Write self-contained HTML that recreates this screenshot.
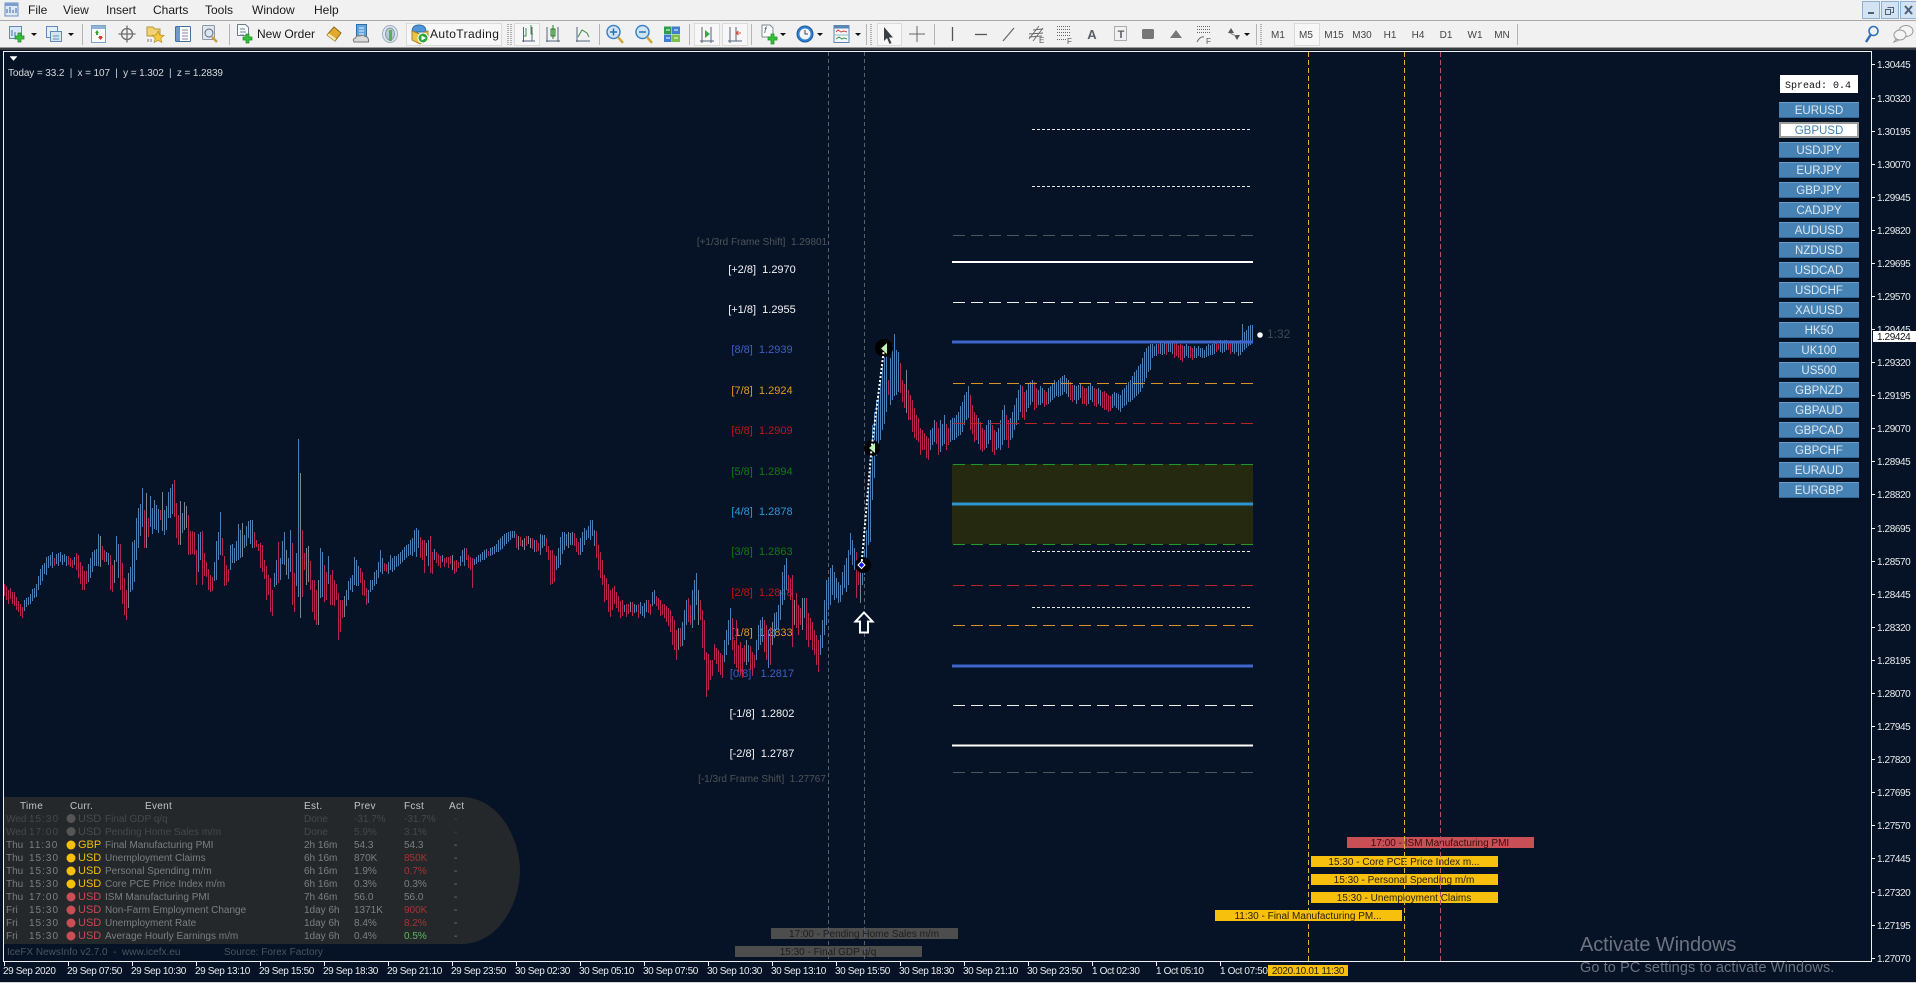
<!DOCTYPE html>
<html><head><meta charset="utf-8"><title>MetaTrader</title>
<style>
html,body{margin:0;padding:0;width:1916px;height:983px;overflow:hidden;background:#061326}
svg{display:block}
text{font-family:"Liberation Sans",sans-serif;font-size:10px}
.m{font-size:12px;fill:#1a1a1a}
.ax{fill:#e8eaec;letter-spacing:-.4px}
.tm{fill:#e8eaec;letter-spacing:-.38px}
.tf{fill:#444;text-anchor:middle}
.lv{font-size:11px;text-anchor:middle}
.bt{font-size:11.5px;fill:#dbe8f3;text-anchor:middle}
.nb{fill:#2b2200;text-anchor:middle}
.h{fill:#c4c4c4;letter-spacing:.3px}
.g{fill:#7e7e7e}
.gt{fill:#7e7e7e;letter-spacing:1px}
.d{fill:#474747}
.dt{fill:#474747;letter-spacing:1px}
.y{fill:#f4bc10;font-size:11px}
.r{fill:#c94a50;font-size:11px}
.dg{fill:#4a4a4a;font-size:11px}
.B{stroke:#4a80b4;fill:none}
.R{stroke:#b8244e;fill:none}
.G{stroke:#7c8490;fill:none}
</style></head><body>
<svg xmlns="http://www.w3.org/2000/svg" width="1916" height="983" viewBox="0 0 1916 983">
<!-- chrome -->
<rect width="1916" height="983" fill="#061326"/>
<rect width="1916" height="47" fill="#f1f1f1"/>
<rect y="20" width="1916" height="1" fill="#a9a9a9"/>
<rect y="47" width="1916" height="1" fill="#9a9a9a"/>
<rect y="48" width="1916" height="2" fill="#3a3d40"/>
<rect y="982" width="1916" height="1" fill="#cfd3d6"/>
<!-- app icon -->
<g transform="translate(12,10)"><rect x="-7" y="-7" width="13" height="13" fill="#dfe8f5" stroke="#6f8fc0"/><rect x="-7" y="-7" width="13" height="3" fill="#7d9fd0"/><path d="M-5 3v-4M-2 3v-6M1 3v-3M4 3v-5" stroke="#3a62a8" fill="none"/></g>
<text class="m" x="28" y="14">File</text><text class="m" x="63" y="14">View</text><text class="m" x="106" y="14">Insert</text><text class="m" x="153" y="14">Charts</text><text class="m" x="205" y="14">Tools</text><text class="m" x="252" y="14">Window</text><text class="m" x="314" y="14">Help</text>
<!-- window buttons -->
<g fill="#d4e3f1" stroke="#8fb0cf"><rect x="1862.5" y="1.5" width="17" height="17"/><rect x="1881.5" y="1.5" width="17" height="17"/><rect x="1900.5" y="1.5" width="16" height="17"/></g>
<rect x="1868" y="12" width="6" height="2" fill="#4c6078"/>
<path d="M1887.5 7.5h6v5h-2M1885.5 9.5h5v5h-5z" fill="none" stroke="#4c6078"/>
<path d="M1905 6l7 8M1912 6l-7 8" stroke="#4c6078" stroke-width="2"/>
<!-- toolbar pressed boxes -->
<g fill="#f7f7f7" stroke="#dadada"><rect x="406.5" y="23.5" width="95" height="22"/><rect x="514.5" y="23.5" width="25" height="22"/><rect x="694.5" y="23.5" width="25" height="22"/><rect x="722.5" y="23.5" width="25" height="22"/><rect x="877.5" y="23.5" width="24" height="22"/><rect x="1294.5" y="23.5" width="25" height="22"/></g>
<path d="M82.5 24v21M229.5 24v21M599.5 24v21M689.5 24v21M751.5 24v21M866.5 24v21M934.5 24v21M1256.5 24v21M1517.5 24v21" stroke="#b4b4b4"/>
<path d="M508 24v21M511 24v21M871 24v21M1261 24v21" stroke="#b0b0b0" stroke-dasharray="1 1" stroke-width="2"/>
<!-- dropdown arrows -->
<path d="M31 33h6l-3 3zM68 33h6l-3 3zM780 33h6l-3 3zM817 33h6l-3 3zM855 33h6l-3 3zM1244 33h6l-3 3z" fill="#111"/>
<!-- new chart -->
<g transform="translate(16,34)"><rect x="-6.5" y="-7.5" width="12" height="12" fill="#d8e8f6" stroke="#5f8bb5"/><path d="M-4 2v-6M-1 2v-4" stroke="#46759e"/><path d="M2-1h3v3h3v3H5v3H2V5h-3V2h3z" fill="#34c23a" stroke="#1c8a22" stroke-width=".7"/></g>
<g transform="translate(53,34)"><rect x="-6.5" y="-7.5" width="11" height="11" fill="#e4eef8" stroke="#5f8bb5"/><rect x="-2.5" y="-2.5" width="11" height="10" fill="#d5e4f3" stroke="#5f8bb5"/><path d="M0 2h6M0 5h6" stroke="#5f8bb5"/></g>
<!-- market watch -->
<g transform="translate(99,34)"><rect x="-7.5" y="-8.5" width="14" height="17" fill="#fbfbfb" stroke="#7ea3c9"/><rect x="-7" y="-8" width="13" height="3" fill="#8fb3d6"/><path d="M-4-1l2-3 2 3h-1v2h-2v-2z" fill="#2fa83a"/><path d="M0 2h3v1h1l-2.500 3L-1 3h1z" fill="#d43a2a"/></g>
<!-- navigator -->
<g transform="translate(127,34)" fill="none" stroke="#6e6e6e" stroke-width="1.300"><circle r="5.500"/><path d="M0-8.500v17M-8.500 0h17"/></g>
<!-- folder star -->
<g transform="translate(155,34)"><path d="M-8-7h6l2 2h5v7h-13z" fill="#f2d275" stroke="#b8953a"/><path d="M3-3l1.800 4 4.200.4-3.200 2.800 1 4.200L3 6.200-.8 8.400l1-4.200L-3 1.400 1.200 1z" fill="#f8c93c" stroke="#b88e1e" stroke-width=".7"/><path d="M-7 5v3M-4 5v3" stroke="#777"/></g>
<!-- terminal -->
<g transform="translate(183,34)"><rect x="-7.500" y="-7.500" width="15" height="15" rx="1" fill="#fdfdfd" stroke="#456f9e"/><rect x="-7" y="-7" width="4" height="14" fill="#6f9ac6"/><path d="M-1-4h6M-1-1h6M-1 2h6M-1 5h6" stroke="#88a"/></g>
<!-- tester -->
<g transform="translate(210,34)"><rect x="-7.500" y="-8.500" width="12" height="14" rx="1" fill="#dfe6ee" stroke="#8a98a8"/><circle cx="-1" cy="-1" r="4" fill="#d8e6f2" stroke="#667"/><path d="M2 3l5 5" stroke="#c9a23c" stroke-width="2.500"/></g>
<!-- new order -->
<g transform="translate(245,34)"><path d="M-7.500-9.500h8l3 3v8h-11z" fill="#fff" stroke="#6a7f94"/><path d="M-5-5h5M-5-2h6M-5 1h4" stroke="#6a7f94"/><path d="M1 0h3v3h3v3H4v3H1V6h-3V3h3z" fill="#34c23a" stroke="#1c8a22" stroke-width=".7"/></g>
<text class="m" x="257" y="38">New Order</text>
<!-- history -->
<g transform="translate(334,34)"><path d="M-7 1L0-7l7 6-6 8z" fill="#e3a92e" stroke="#8f6a18"/><path d="M-7 1l8 6 1-2.500-7-5z" fill="#f9e6a8"/></g>
<!-- data folder -->
<g transform="translate(361,34)"><rect x="-4.500" y="-9.500" width="10" height="12" fill="#62a5de" stroke="#2f6ea5"/><path d="M-2-6h5M-2-3h5M-2 0h5" stroke="#e6f1fb"/><path d="M-7 8q-2-3 1.500-4 1-3 4.500-2 3-2 5 .5 4 0 3.500 5.500z" fill="#d9d9d9" stroke="#777"/></g>
<!-- signal -->
<g transform="translate(390,34)"><ellipse rx="7.500" ry="8.500" fill="#dfe7ee" stroke="#9fb0bf"/><ellipse rx="4.500" ry="6" fill="#b8c8d6" stroke="#8397a8"/><path d="M-1-4h3v11h-3z" fill="#58b44a"/></g>
<!-- autotrading -->
<g transform="translate(420,34)"><path d="M-8-2q0-7 7-7t7 7z" fill="#4f95d8" stroke="#2e6da8"/><path d="M-8-3l8 3 8-3v9l-8 4-8-4z" fill="#e8c34a" stroke="#a9852a"/><circle cx="3" cy="4" r="5" fill="#2aa53a" stroke="#fff"/><path d="M1.500 1.500L6 4l-4.500 2.500z" fill="#fff"/></g>
<text class="m" x="430" y="38" letter-spacing=".4">AutoTrading</text>
<!-- chart types -->
<g fill="none" stroke="#53657a"><path d="M522 41h13M523.500 42V27M532 41V27"/></g><path d="M526 28v8h-2M531 25v9h2" fill="none" stroke="#3e8f4a"/>
<g transform="translate(553,34)" fill="none" stroke="#53657a"><path d="M-7 7h14M-6 8v-15M5 8v-15"/><rect x="-2" y="-5" width="4" height="7" fill="#a6d8a6" stroke="#2c7d2c"/><path d="M0-9v14" stroke="#2c7d2c"/></g>
<g transform="translate(583,34)" fill="none"><path d="M-7 7h14M-6 8v-15" stroke="#53657a"/><path d="M-5 3l4-7 5 3 2 4" stroke="#3e8f4a"/></g>
<!-- zoom -->
<g transform="translate(615,34)"><circle cx="-1.500" cy="-2" r="6.500" fill="#d0e4f6" stroke="#3f82c2" stroke-width="1.500"/><path d="M-5-2h7M-1.500-5.500v7" stroke="#2e6eae" stroke-width="1.500"/><path d="M3 3l5 6" stroke="#cfa536" stroke-width="2.500"/></g>
<g transform="translate(644,34)"><circle cx="-1.500" cy="-2" r="6.500" fill="#d0e4f6" stroke="#3f82c2" stroke-width="1.500"/><path d="M-5-2h7" stroke="#2e6eae" stroke-width="1.500"/><path d="M3 3l5 6" stroke="#cfa536" stroke-width="2.500"/></g>
<g transform="translate(672,34)"><rect x="-8" y="-7.500" width="7.500" height="7.500" fill="#2f9e4a"/><rect x="0" y="-7.500" width="8" height="7.500" fill="#3f7fd0"/><rect x="-8" y=".5" width="7.500" height="7.500" fill="#3f7fd0"/><rect x="0" y=".5" width="8" height="7.500" fill="#7ac04a"/><path d="M-6-4h4M2-4h4M-6 4h4M2 4h4" stroke="#fff"/></g>
<!-- autoscroll/shift -->
<g transform="translate(707,34)"><path d="M-7 7h14M-5 9V-7M4 9V-7" stroke="#53657a" fill="none"/><path d="M-2-4l5 4-5 4z" fill="#3aa84a"/></g>
<g transform="translate(735,34)"><path d="M-7 7h14M-5 9V-7M1 7V-7" stroke="#53657a" fill="none"/><path d="M6-1l-4 0M3.500-3l-2.500 2 2.500 2" stroke="#d44a3a" fill="none"/></g>
<!-- indicators -->
<g transform="translate(770,34)"><path d="M-8-9h8l3 3v9h-11z" fill="#fff" stroke="#7a8a9a"/><text x="-6" y="-1" fill="#555" style="font-size:9px;font-style:italic">f</text><path d="M1 0h3v3h3v3H4v4H1V6h-3V3h3z" fill="#34c23a" stroke="#1c8a22" stroke-width=".7"/></g>
<!-- clock -->
<g transform="translate(805,34)"><circle r="8" fill="#2f7fd0" stroke="#1b5a9e"/><circle r="5.500" fill="#f3f6f9"/><path d="M0-4v4h3" stroke="#444" fill="none"/></g>
<!-- templates -->
<g transform="translate(842,34)"><rect x="-8" y="-8.500" width="15" height="17" fill="#f2f6fa" stroke="#5a86b5"/><rect x="-8" y="-8.500" width="15" height="3" fill="#5a86b5"/><path d="M-6-2l2-2 3 2 3-1 3 1" stroke="#c44" fill="none"/><path d="M-7 1h13" stroke="#9bb"/><path d="M-6 5l3-2 3 2 2-1 3 1" stroke="#3a9a4a" fill="none"/></g>
<!-- cursor -->
<path d="M884 27l0 14 3-3 2.500 6 2-1-2.500-5.500 4 0z" fill="#3a3f46"/>
<path d="M917 26v16M909 34h16" stroke="#666" fill="none"/>
<path d="M952.500 27v14" stroke="#555" fill="none" stroke-width="1.300"/>
<path d="M975 34.500h12" stroke="#555" fill="none" stroke-width="1.300"/>
<path d="M1003 41l11-13" stroke="#666" fill="none" stroke-width="1.200"/>
<g transform="translate(1036,34)" fill="none" stroke="#666"><path d="M-7 5L3-8M-3 7L7-6M-7 0L7-1M-7 3L6 2M-3-4L7-5" stroke-width=".9"/><text x="3" y="9" style="font-size:8px" fill="#555" stroke="none">E</text></g>
<g transform="translate(1064,34)"><path d="M-7-7.500h13M-7-4.500h13M-7-1.500h13M-7 1.500h13M-7 5.500h10" stroke="#666" stroke-dasharray="1 1" fill="none"/><text x="3" y="10" style="font-size:8px" fill="#555">F</text></g>
<text x="1092" y="39" style="font-size:13px;font-weight:700" fill="#5a5f66" text-anchor="middle">A</text>
<g transform="translate(1121,34)"><rect x="-6.500" y="-7.500" width="12" height="14" fill="none" stroke="#666" stroke-dasharray="1 1"/><text x="0" y="4" style="font-size:11px;font-weight:700" fill="#5a5f66" text-anchor="middle">T</text></g>
<rect x="1142" y="29" width="12" height="10" rx="1.500" fill="#777"/>
<path d="M1170 38l6-8 6 8z" fill="#777"/>
<g transform="translate(1204,34)"><path d="M-7-7.500h14M-7-4.500h14M-7-1.500h14" stroke="#666" stroke-dasharray="1 1" fill="none"/><path d="M-7 8q3-6 7-5" stroke="#666" fill="none"/><text x="2" y="10" style="font-size:8px" fill="#555">F</text></g>
<g transform="translate(1233,34)"><path d="M-5-1l3-5 3 5zM1 1l3 5 3-5z" fill="#555"/><path d="M-3-1l6 3" stroke="#888"/></g>
<!-- timeframes -->
<text class="tf" x="1278" y="38">M1</text><text class="tf" x="1306" y="38">M5</text><text class="tf" x="1334" y="38">M15</text><text class="tf" x="1362" y="38">M30</text><text class="tf" x="1390" y="38">H1</text><text class="tf" x="1418" y="38">H4</text><text class="tf" x="1446" y="38">D1</text><text class="tf" x="1475" y="38">W1</text><text class="tf" x="1502" y="38">MN</text>
<g transform="translate(1872,34)" fill="none"><circle cx="1.500" cy="-3" r="4.500" stroke="#2f6fb8" stroke-width="1.600"/><path d="M-1.500 1L-6 8" stroke="#2f6fb8" stroke-width="2.500"/></g>
<g transform="translate(1903,34)" fill="#f4f4f4" stroke="#999"><ellipse cx="3" cy="-3" rx="7" ry="5.500"/><ellipse cx="-3" cy="1" rx="6" ry="5"/><path d="M-7 5l-2 3 4-1.500z"/></g>

<!-- chart frame -->
<path d="M3.500 51.500H1871.500V961.500H3.500z" fill="none" stroke="#f2f2f2" shape-rendering="crispEdges"/>
<path d="M10 56.500h7l-3.500 4z" fill="#fff" stroke="#fff" stroke-width=".5"/>
<text x="8" y="76" fill="#d6d8da" style="letter-spacing:-.1px">Today = 33.2 &#160;|&#160; x = 107 &#160;|&#160; y = 1.302 &#160;|&#160; z = 1.2839</text>

<!-- box under lines -->
<rect x="952" y="464" width="301" height="80" fill="#25290f"/>

<!-- murrey labels -->
<text class="lv" x="762" y="245" fill="#4e5358" style="font-size:10px">[+1/3rd Frame Shift]&#160; 1.29801</text>
<text class="lv" x="762" y="273" fill="#f4f4f4">[+2/8]&#160;&#160;1.2970</text>
<text class="lv" x="762" y="313" fill="#f4f4f4">[+1/8]&#160;&#160;1.2955</text>
<text class="lv" x="762" y="353" fill="#3f5fc0">[8/8]&#160;&#160;1.2939</text>
<text class="lv" x="762" y="394" fill="#e39a1e">[7/8]&#160;&#160;1.2924</text>
<text class="lv" x="762" y="434" fill="#c41414">[6/8]&#160;&#160;1.2909</text>
<text class="lv" x="762" y="475" fill="#107a14">[5/8]&#160;&#160;1.2894</text>
<text class="lv" x="762" y="515" fill="#2b98d6">[4/8]&#160;&#160;1.2878</text>
<text class="lv" x="762" y="555" fill="#107a14">[3/8]&#160;&#160;1.2863</text>
<text class="lv" x="762" y="596" fill="#c41414">[2/8]&#160;&#160;1.2848</text>
<text class="lv" x="762" y="636" fill="#e39a1e">[1/8]&#160;&#160;1.2833</text>
<text class="lv" x="762" y="677" fill="#3f5fc0">[0/8]&#160;&#160;&#160;1.2817</text>
<text class="lv" x="762" y="717" fill="#f4f4f4">[-1/8]&#160;&#160;1.2802</text>
<text class="lv" x="762" y="757" fill="#f4f4f4">[-2/8]&#160;&#160;1.2787</text>
<text class="lv" x="762" y="782" fill="#4e5358" style="font-size:10px">[-1/3rd Frame Shift]&#160; 1.27767</text>

<!-- news bars -->
<rect x="771" y="928" width="187" height="11" fill="#4d4d4d"/><text class="nb" x="864" y="937" style="fill:#1e1e1e">17:00 - Pending Home Sales m/m</text>
<rect x="735" y="946" width="187" height="11" fill="#4d4d4d"/><text class="nb" x="828" y="955" style="fill:#1e1e1e">15:30 - Final GDP q/q</text>
<rect x="1347" y="837" width="187" height="11" fill="#c84f55"/><text class="nb" x="1440" y="846" style="fill:#3a0c0c">17:00 - ISM Manufacturing PMI</text>
<g fill="#f6c00c"><rect x="1311" y="856" width="187" height="11"/><rect x="1311" y="874" width="187" height="11"/><rect x="1311" y="892" width="187" height="11"/><rect x="1215" y="910" width="187" height="11"/></g>
<text class="nb" x="1404" y="865">15:30 - Core PCE Price Index m...</text>
<text class="nb" x="1404" y="883">15:30 - Personal Spending m/m</text>
<text class="nb" x="1404" y="901">15:30 - Unemployment Claims</text>
<text class="nb" x="1308" y="919">11:30 - Final Manufacturing PM...</text>

<!-- vertical event lines -->
<g fill="none" shape-rendering="crispEdges">
<path d="M828.500 52V961M864.500 52V961" stroke="#57616e" stroke-dasharray="4 3"/>
<path d="M1308.500 52V961M1404.500 52V961" stroke="#dcb637" stroke-dasharray="5 3"/>
<path d="M1440.500 52V961" stroke="#b55068" stroke-dasharray="5 3"/>
</g>

<!-- price bars -->
<g transform="translate(.5 0)" shape-rendering="crispEdges">
<path class="R" d="M4 584V596M6 586V600M8 590V604M10 588V599M12 592V604M14 592V606M16 597V610M18 601V612M20 604V616M22 607V618"/>
<path class="B" d="M24 600V611M26 598V607M28 597V605M30 594V604M32 589V601M34 588V598M36 584V597M38 576V590M40 569V585M42 565V581M44 563V574M46 557V575M48 556V568M50 555V566M52 552V568"/>
<path class="R" d="M54 558V566"/>
<path class="B" d="M56 554V564M58 553V566M60 552V562M62 555V565M64 554V562M66 556V566"/>
<path class="R" d="M68 556V565M70 558V567M72 560V568"/>
<path class="B" d="M74 557V565"/>
<path class="R" d="M76 553V570M78 555V578M80 562V584M82 566V590M84 571V590M86 571V584"/>
<path class="B" d="M88 564V582M90 558V578M92 552V572M94 550V566M96 549V566M98 534V566"/>
<path class="G" d="M100 536V567"/>
<path class="R" d="M102 546V560M104 550V562"/>
<path class="B" d="M106 552V562M108 553V565"/>
<path class="R" d="M110 555V590M112 565V592"/>
<path class="G" d="M114 560V583"/>
<path class="B" d="M116 536V562M118 544V578"/>
<path class="R" d="M120 544V590M122 563V604M124 578V615M126 590V620"/>
<path class="G" d="M128 573V608"/>
<path class="B" d="M130 567V592M132 542V590M134 540V582M136 518V560M138 508V548M140 504V536M142 488V527"/>
<path class="R" d="M144 510V548"/>
<path class="G" d="M146 493V548"/>
<path class="R" d="M148 518V537"/>
<path class="B" d="M150 496V527M152 508V534M154 500V529M156 505V530M158 509V533"/>
<path class="R" d="M160 510V520"/>
<path class="G" d="M162 492V531"/>
<path class="B" d="M164 510V535M166 506V530M168 492V518M170 488V518M172 484V514"/>
<path class="R" d="M174 480V517M176 503V538M178 515V545"/>
<path class="G" d="M180 501V545"/>
<path class="B" d="M182 513V533"/>
<path class="G" d="M184 502V530M186 506V528"/>
<path class="R" d="M188 515V555M190 531V555M192 531V554M194 532V555M196 550V585"/>
<path class="B" d="M198 534V572M200 532V560"/>
<path class="R" d="M202 531V585M204 553V576M206 562V577M208 569V590M210 575V592M212 577V591"/>
<path class="B" d="M214 562V581M216 541V580M218 532V560M220 512V555"/>
<path class="R" d="M222 538V556M224 556V586M226 565V585M228 569V582"/>
<path class="B" d="M230 545V570M232 544V563M234 548V563M236 541V561M238 524V560M240 530V558"/>
<path class="G" d="M242 523V557"/>
<path class="B" d="M244 535V548M246 526V546M248 521V538M250 520V544M252 520V548"/>
<path class="R" d="M254 532V548M256 540V547M258 544V551M260 543V568M262 545V572M264 560V579"/>
<path class="R" d="M266 566V600M268 575V595M270 578V612M272 590V616"/>
<path class="B" d="M274 573V587M276 560V585"/>
<path class="R" d="M278 542V583"/>
<path class="B" d="M280 558V580M282 541V564M284 532V565"/>
<path class="G" d="M286 550V575"/>
<path class="B" d="M288 558V579M290 530V572"/>
<path class="R" d="M292 543V605M294 573V612"/>
<path class="B" d="M296 553V586M298 439V597"/>
<path class="G" d="M300 473V618"/>
<path class="R" d="M302 530V597M304 553V570"/>
<path class="G" d="M306 548V585M308 546V582"/>
<path class="R" d="M310 561V590M312 580V612M314 580V620M316 590V625"/>
<path class="G" d="M318 580V625"/>
<path class="B" d="M320 548V598M322 552V597"/>
<path class="R" d="M324 565V602M326 572V600"/>
<path class="B" d="M328 556V584"/>
<path class="R" d="M330 575V605M332 570V605M334 580V606M336 584V600M338 593V640M340 600V632M342 600V618"/>
<path class="G" d="M344 596V617"/>
<path class="B" d="M346 590V606M348 581V600M350 578V590M352 575V592M354 557V585M356 560V586M358 566V586"/>
<path class="R" d="M360 568V583M362 572V595M364 580V596M366 588V605"/>
<path class="B" d="M368 590V603M370 580V592M372 580V590M374 572V586M376 570V584M378 562V578M380 550V572M382 558V574"/>
<path class="R" d="M384 563V571M386 564V572"/>
<path class="B" d="M388 562V574M390 555V570M392 558V572M394 556V570M396 556V567M398 554V566"/>
<path class="B" d="M400 552V564M402 550V562M404 547V560M406 545V558M408 544V556M410 540V555M412 538V556M414 530V552M416 528V557"/>
<path class="B" d="M418 530V548"/>
<path class="R" d="M420 537V558M422 540V560M424 540V573"/>
<path class="G" d="M426 543V556"/>
<path class="B" d="M428 540V566"/>
<path class="R" d="M430 536V573M432 552V574"/>
<path class="B" d="M434 549V560"/>
<path class="R" d="M436 552V563M438 554V566M440 556V568"/>
<path class="B" d="M442 555V562"/>
<path class="R" d="M444 558V567M446 557V563M448 557V568M450 556V564"/>
<path class="G" d="M452 555V570"/>
<path class="R" d="M454 561V574M456 560V572M458 562V568"/>
<path class="B" d="M460 556V566M462 550V562M464 548V566"/>
<path class="R" d="M466 548V560M468 555V568M470 557V570M472 558V588"/>
<path class="B" d="M474 559V565M476 557V564M478 555V562M480 554V562M482 552V560M484 550V560M486 549V558"/>
<path class="R" d="M488 551V556"/>
<path class="B" d="M490 548V556M492 547V555M494 546V554M496 544V552M498 540V552"/>
<path class="B" d="M500 538V550M502 536V549M504 534V546M506 533V544M508 532V542M510 531V540M512 531V538M514 531V538"/>
<path class="R" d="M516 534V548"/>
<path class="G" d="M518 536V550"/>
<path class="R" d="M520 537V546"/>
<path class="G" d="M522 540V547M524 538V550"/>
<path class="R" d="M526 536V546"/>
<path class="G" d="M528 536V544M530 538V548"/>
<path class="R" d="M532 538V549"/>
<path class="B" d="M534 540V552"/>
<path class="R" d="M536 540V552M538 543V551"/>
<path class="B" d="M540 534V555M542 535V548M544 535V546"/>
<path class="R" d="M546 538V552M548 546V560M550 550V585M552 550V584M554 555V582"/>
<path class="B" d="M556 556V570M558 548V568M560 537V565M562 532V554M564 532V550M566 534V546"/>
<path class="G" d="M568 532V548"/>
<path class="B" d="M570 533V545M572 532V545"/>
<path class="R" d="M574 533V546M576 538V552M578 542V555"/>
<path class="B" d="M582 532V552M580 538V555M584 528V545M586 530V540M588 526V538M590 520V540M592 520V536M594 530V546"/>
<path class="R" d="M596 531V558M598 545V570M600 552V578M602 560V585M604 575V602M606 578V600"/>
<path class="R" d="M608 584V612M610 590V617M612 588V610M614 586V604"/>
<path class="R" d="M616 592V608M618 596V612M620 601V618M622 600V616"/>
<path class="B" d="M624 605V612"/>
<path class="R" d="M626 604V617M628 604V614"/>
<path class="G" d="M630 602V612"/>
<path class="R" d="M632 602V616"/>
<path class="B" d="M634 604V613M636 605V612"/>
<path class="R" d="M638 604V618"/>
<path class="B" d="M640 602V614M642 606V616M644 603V618M646 600V612"/>
<path class="R" d="M648 600V613M650 604V615"/>
<path class="B" d="M652 592V606M654 590V604"/>
<path class="R" d="M656 596V606M658 598V610M660 600V616M662 604V615M664 604V618M666 606V622M668 608V626M670 610V632M672 616V645"/>
<path class="R" d="M674 620V650M676 630V660"/>
<path class="G" d="M678 628V650"/>
<path class="R" d="M680 628V647"/>
<path class="B" d="M682 622V646M684 610V640M686 600V625"/>
<path class="R" d="M688 598V622M690 605V625"/>
<path class="B" d="M692 590V628M694 580V620M696 573V605"/>
<path class="G" d="M698 590V625"/>
<path class="R" d="M700 600V620M702 610V648M704 620V660M706 652V697M708 654V690M710 660V680M712 660V676"/>
<path class="R" d="M714 644V660M716 648V664M718 650V672M720 653V675M722 655V678"/>
<path class="B" d="M724 640V662M726 630V655M728 620V645M730 608V640"/>
<path class="R" d="M732 618V650M734 640V664"/>
<path class="R" d="M736 620V668M738 645V672M740 642V675M742 648V678M744 645V662"/>
<path class="G" d="M746 640V665"/>
<path class="B" d="M748 645V662"/>
<path class="R" d="M750 646V670M752 652V676M754 655V668"/>
<path class="B" d="M756 640V660M758 625V650M760 620V645M762 617V642"/>
<path class="R" d="M764 620V652M766 625V660"/>
<path class="B" d="M768 630V668"/>
<path class="R" d="M770 627V665"/>
<path class="G" d="M772 622V645"/>
<path class="B" d="M774 613V638M776 612V630M778 605V630M780 590V620M782 572V605M784 565V600M786 558V590"/>
<path class="R" d="M788 575V593M790 578V600M792 575V647"/>
<path class="G" d="M794 600V625"/>
<path class="R" d="M796 593V628M798 605V635M800 608V625"/>
<path class="G" d="M802 598V630"/>
<path class="B" d="M804 598V618"/>
<path class="R" d="M806 598V640M808 613V647M810 618V640M812 622V650M814 630V655M816 635V665M818 640V672"/>
<path class="B" d="M820 635V655M822 620V648M824 600V635M826 580V625M828 578V610"/>
<path class="B" d="M830 568V605M832 565V595M834 572V600M836 578V598"/>
<path class="B" d="M838 582V603M840 585V602M842 572V595M844 565V588M846 558V592M848 550V585M850 533V555M852 540V565"/>
<path class="B" d="M854 548V570"/>
<path class="R" d="M856 552V598M858 566V585"/>
<path class="G" d="M860 570V603"/>
<path class="B" d="M862 556V585M864 550V575M866 530V565M868 490V545M870 470V542M872 425V500M874 412V478M876 400V456M878 395V450M880 380V440M882 365V430M884 350V424"/>
<path class="B" d="M886 352V412"/>
<path class="R" d="M888 380V395"/>
<path class="B" d="M890 358V405M892 345V400M894 334V396M896 350V395M898 352V392"/>
<path class="R" d="M900 363V393M902 380V402M904 384V408"/>
<path class="G" d="M906 370V413"/>
<path class="R" d="M908 390V420M910 395V420M912 400V432M914 408V438M916 415V440"/>
<path class="R" d="M918 418V442M920 428V455M922 430V450M924 433V450M926 436V458M928 438V460"/>
<path class="B" d="M930 430V450M932 428V445M934 420V442"/>
<path class="R" d="M936 422V444M938 428V455"/>
<path class="B" d="M940 420V452M942 424V446M944 415V444"/>
<path class="R" d="M946 424V450M948 428V445"/>
<path class="B" d="M950 420V442M952 418V440M954 418V440M956 415V438M958 412V436M960 406V435M962 402V432M964 395V425M966 392V420M968 386V418"/>
<path class="R" d="M970 395V430M972 405V434M974 412V442M976 415V440"/>
<path class="B" d="M978 418V444"/>
<path class="R" d="M980 422V450M982 428V452M984 430V450"/>
<path class="B" d="M986 425V448M988 420V444M990 420V440"/>
<path class="R" d="M992 425V452M994 430V455"/>
<path class="B" d="M996 432V450M998 428V448M1000 420V450M1002 410V445M1004 405V440"/>
<path class="R" d="M1006 415V440M1008 420V448"/>
<path class="B" d="M1010 418V440M1012 412V438M1014 405V430M1016 398V425M1018 390V420M1020 385V412"/>
<path class="R" d="M1022 386V418M1024 392V420"/>
<path class="B" d="M1026 390V412M1028 384V408M1030 382V405M1032 380V402"/>
<path class="R" d="M1034 382V410M1036 388V408"/>
<path class="B" d="M1038 390V405M1040 386V405M1042 388V403"/>
<path class="R" d="M1044 390V407M1046 392V405"/>
<path class="B" d="M1048 388V404M1050 386V402M1052 384V400M1054 380V398M1056 382V396M1058 380V397M1060 378V396M1062 376V395M1064 375V392M1066 378V394"/>
<path class="G" d="M1068 380V397"/>
<path class="R" d="M1070 382V400M1072 385V402"/>
<path class="B" d="M1074 385V400M1076 386V404M1078 385V400M1080 384V398"/>
<path class="R" d="M1082 386V404M1084 388V404M1086 388V406"/>
<path class="B" d="M1088 386V404M1090 384V400M1092 386V402"/>
<path class="R" d="M1094 388V406M1096 389V407"/>
<path class="B" d="M1098 388V404M1100 390V406"/>
<path class="R" d="M1102 392V408M1104 391V410M1106 393V410M1108 395V412M1110 396V411"/>
<path class="B" d="M1112 394V408M1114 392V406M1116 393V408M1118 394V410M1120 395V412M1122 390V408M1124 388V406M1126 385V405M1128 382V402M1130 380V402M1132 376V400M1134 372V398M1136 370V396M1138 366V394M1140 364V392M1142 358V388M1144 352V382M1146 348V378M1148 346V372M1150 344V370"/>
<path class="B" d="M1152 344V358M1154 346V356M1156 344V356"/>
<path class="R" d="M1158 344V354"/>
<path class="B" d="M1160 343V354M1162 344V355M1164 342V354"/>
<path class="R" d="M1166 343V355"/>
<path class="B" d="M1168 342V352M1170 341V352M1172 342V354"/>
<path class="R" d="M1174 343V358M1176 343V356M1178 345V358"/>
<path class="R" d="M1180 344V360M1182 345V362"/>
<path class="B" d="M1184 346V358M1186 344V356M1188 346V358"/>
<path class="R" d="M1190 346V358M1192 348V360"/>
<path class="B" d="M1194 346V358M1196 348V358M1198 346V356M1200 348V357M1202 348V358M1204 350V358M1206 346V357M1208 344V356M1210 345V355M1212 344V355M1214 342V354"/>
<path class="R" d="M1216 343V352M1218 344V350"/>
<path class="B" d="M1220 340V352M1222 342V353M1224 340V352M1226 340V350"/>
<path class="R" d="M1228 342V350M1230 342V354"/>
<path class="B" d="M1232 343V352M1234 342V354M1236 342V352M1238 342V356M1240 340V355M1242 324V352M1244 332V350M1246 330V348M1248 326V346M1250 325V345M1252 325V343"/>
</g>

<!-- murrey lines -->
<g fill="none" shape-rendering="crispEdges">
<path d="M1032 129.500h220M1032 186.500h220M1032 551.500h220M1032 607.500h220" stroke="#e8e8e8" stroke-dasharray="3 2"/>
<path d="M953 235.500h300M953 772.500h300" stroke="#4f555c" stroke-dasharray="12 6"/>
<path d="M952 262h301M952 745.500h301" stroke="#fff" stroke-width="2"/>
<path d="M953 302.500h300M953 705.500h300" stroke="#f0f0f0" stroke-dasharray="12 6"/>
<path d="M952 342h301M952 666h301" stroke="#3f66cc" stroke-width="3"/>
<path d="M953 383.500h300M953 625.500h300" stroke="#d9922a" stroke-dasharray="12 6"/>
<path d="M953 423.500h300M953 585.500h300" stroke="#b8262a" stroke-dasharray="12 6"/>
<path d="M953 464.500h300M953 544.500h300" stroke="#1f9a2a" stroke-dasharray="12 6"/>
<path d="M952 504h301" stroke="#2b95d0" stroke-width="3"/>
</g>
<!-- last price marker -->
<circle cx="1260" cy="335" r="2.800" fill="#fff"/>
<text x="1267" y="338" fill="#3d4756" style="font-size:12px">1:32</text>

<!-- zigzag -->
<circle cx="863" cy="565" r="8" fill="#000"/><circle cx="872" cy="448" r="8" fill="#000"/><circle cx="884" cy="348" r="9" fill="#000"/>
<path d="M861.500 565L871.500 449 884 349" fill="none" stroke="#fff" stroke-width="2" stroke-dasharray="2 2"/>
<path d="M861.500 561.500l3.500 3.500-3.500 3.500-3.500-3.500z" fill="#1414e0" stroke="#fff"/>
<path d="M875 443v10l-6-5z" fill="#bff0b8"/><path d="M887 343v11l-6-5.500z" fill="#bff0b8"/>
<path d="M864 612.500l8.500 9h-4.500v11h-8v-11h-4.500z" fill="#061326" stroke="#fff" stroke-width="2"/>

<!-- symbol buttons -->
<rect x="1780" y="75" width="78" height="18" fill="#fff"/>
<text x="1785" y="88" style="font-family:'Liberation Mono',monospace;font-size:10px" fill="#111">Spread: 0.4</text>
<g fill="#4682b4">
<rect x="1779" y="102" width="80" height="16"/><rect x="1779" y="142" width="80" height="16"/><rect x="1779" y="162" width="80" height="16"/><rect x="1779" y="182" width="80" height="16"/><rect x="1779" y="202" width="80" height="16"/><rect x="1779" y="222" width="80" height="16"/><rect x="1779" y="242" width="80" height="16"/><rect x="1779" y="262" width="80" height="16"/><rect x="1779" y="282" width="80" height="16"/><rect x="1779" y="302" width="80" height="16"/><rect x="1779" y="322" width="80" height="16"/><rect x="1779" y="342" width="80" height="16"/><rect x="1779" y="362" width="80" height="16"/><rect x="1779" y="382" width="80" height="16"/><rect x="1779" y="402" width="80" height="16"/><rect x="1779" y="422" width="80" height="16"/><rect x="1779" y="442" width="80" height="16"/><rect x="1779" y="462" width="80" height="16"/><rect x="1779" y="482" width="80" height="16"/>
</g>
<path d="M1779 102.500h80M1779 142.500h80M1779 162.500h80M1779 182.500h80M1779 202.500h80M1779 222.500h80M1779 242.500h80M1779 262.500h80M1779 282.500h80M1779 302.500h80M1779 322.500h80M1779 342.500h80M1779 362.500h80M1779 382.500h80M1779 402.500h80M1779 422.500h80M1779 442.500h80M1779 462.500h80M1779 482.500h80" stroke="#6a9dc8" fill="none"/>
<path d="M1779 117.500h80M1779 157.500h80M1779 177.500h80M1779 197.500h80M1779 217.500h80M1779 237.500h80M1779 257.500h80M1779 277.500h80M1779 297.500h80M1779 317.500h80M1779 337.500h80M1779 357.500h80M1779 377.500h80M1779 397.500h80M1779 417.500h80M1779 437.500h80M1779 457.500h80M1779 477.500h80M1779 497.500h80" stroke="#2f6494" fill="none"/>
<rect x="1780" y="123" width="78" height="14" fill="#fff" stroke="#9a9a9a" stroke-width="2"/>
<text class="bt" x="1819" y="114">EURUSD</text>
<text class="bt" x="1819" y="134" style="fill:#4682b4">GBPUSD</text>
<text class="bt" x="1819" y="154">USDJPY</text>
<text class="bt" x="1819" y="174">EURJPY</text>
<text class="bt" x="1819" y="194">GBPJPY</text>
<text class="bt" x="1819" y="214">CADJPY</text>
<text class="bt" x="1819" y="234">AUDUSD</text>
<text class="bt" x="1819" y="254">NZDUSD</text>
<text class="bt" x="1819" y="274">USDCAD</text>
<text class="bt" x="1819" y="294">USDCHF</text>
<text class="bt" x="1819" y="314">XAUUSD</text>
<text class="bt" x="1819" y="334">HK50</text>
<text class="bt" x="1819" y="354">UK100</text>
<text class="bt" x="1819" y="374">US500</text>
<text class="bt" x="1819" y="394">GBPNZD</text>
<text class="bt" x="1819" y="414">GBPAUD</text>
<text class="bt" x="1819" y="434">GBPCAD</text>
<text class="bt" x="1819" y="454">GBPCHF</text>
<text class="bt" x="1819" y="474">EURAUD</text>
<text class="bt" x="1819" y="494">EURGBP</text>

<!-- price axis -->
<path d="M1871 64.500h4M1871 98.500h4M1871 131.500h4M1871 164.500h4M1871 197.500h4M1871 230.500h4M1871 263.500h4M1871 296.500h4M1871 329.500h4M1871 362.500h4M1871 395.500h4M1871 428.500h4M1871 461.500h4M1871 494.500h4M1871 528.500h4M1871 561.500h4M1871 594.500h4M1871 627.500h4M1871 660.500h4M1871 693.500h4M1871 726.500h4M1871 759.500h4M1871 792.500h4M1871 825.500h4M1871 858.500h4M1871 892.500h4M1871 925.500h4M1871 958.500h4" stroke="#f0f0f0" fill="none"/>
<text class="ax" x="1877" y="68">1.30445</text><text class="ax" x="1877" y="102">1.30320</text><text class="ax" x="1877" y="135">1.30195</text><text class="ax" x="1877" y="168">1.30070</text><text class="ax" x="1877" y="201">1.29945</text><text class="ax" x="1877" y="234">1.29820</text><text class="ax" x="1877" y="267">1.29695</text><text class="ax" x="1877" y="300">1.29570</text><text class="ax" x="1877" y="333">1.29445</text><text class="ax" x="1877" y="366">1.29320</text><text class="ax" x="1877" y="399">1.29195</text><text class="ax" x="1877" y="432">1.29070</text><text class="ax" x="1877" y="465">1.28945</text><text class="ax" x="1877" y="498">1.28820</text><text class="ax" x="1877" y="532">1.28695</text><text class="ax" x="1877" y="565">1.28570</text><text class="ax" x="1877" y="598">1.28445</text><text class="ax" x="1877" y="631">1.28320</text><text class="ax" x="1877" y="664">1.28195</text><text class="ax" x="1877" y="697">1.28070</text><text class="ax" x="1877" y="730">1.27945</text><text class="ax" x="1877" y="763">1.27820</text><text class="ax" x="1877" y="796">1.27695</text><text class="ax" x="1877" y="829">1.27570</text><text class="ax" x="1877" y="862">1.27445</text><text class="ax" x="1877" y="896">1.27320</text><text class="ax" x="1877" y="929">1.27195</text><text class="ax" x="1877" y="962">1.27070</text>
<rect x="1873" y="331" width="43" height="11" fill="#fff"/>
<text x="1877" y="340" style="letter-spacing:-.4px" fill="#111">1.29424</text>

<!-- time axis -->
<path d="M4.500 961v5M68.500 961v5M132.500 961v5M196.500 961v5M260.500 961v5M324.500 961v5M388.500 961v5M452.500 961v5M516.500 961v5M580.500 961v5M644.500 961v5M708.500 961v5M772.500 961v5M836.500 961v5M900.500 961v5M964.500 961v5M1028.500 961v5M1092.500 961v5M1156.500 961v5M1220.500 961v5" stroke="#f0f0f0" fill="none"/>
<text class="tm" x="3" y="974">29 Sep 2020</text><text class="tm" x="67" y="974">29 Sep 07:50</text><text class="tm" x="131" y="974">29 Sep 10:30</text><text class="tm" x="195" y="974">29 Sep 13:10</text><text class="tm" x="259" y="974">29 Sep 15:50</text><text class="tm" x="323" y="974">29 Sep 18:30</text><text class="tm" x="387" y="974">29 Sep 21:10</text><text class="tm" x="451" y="974">29 Sep 23:50</text><text class="tm" x="515" y="974">30 Sep 02:30</text><text class="tm" x="579" y="974">30 Sep 05:10</text><text class="tm" x="643" y="974">30 Sep 07:50</text><text class="tm" x="707" y="974">30 Sep 10:30</text><text class="tm" x="771" y="974">30 Sep 13:10</text><text class="tm" x="835" y="974">30 Sep 15:50</text><text class="tm" x="899" y="974">30 Sep 18:30</text><text class="tm" x="963" y="974">30 Sep 21:10</text><text class="tm" x="1027" y="974">30 Sep 23:50</text><text class="tm" x="1092" y="974">1 Oct 02:30</text><text class="tm" x="1156" y="974">1 Oct 05:10</text><text class="tm" x="1220" y="974">1 Oct 07:50</text>
<rect x="1268" y="965" width="80" height="11" fill="#f6c00c"/>
<text x="1308" y="974" text-anchor="middle" fill="#2b2200" style="letter-spacing:-.3px">2020.10.01 11:30</text>

<!-- news table -->
<path d="M4 797H461C500 797 520 840 520 870.500C520 901 500 944 461 944H4z" fill="#24282b"/>
<text class="h" x="20" y="809">Time</text><text class="h" x="70" y="809">Curr.</text><text class="h" x="145" y="809">Event</text><text class="h" x="304" y="809">Est.</text><text class="h" x="354" y="809">Prev</text><text class="h" x="404" y="809">Fcst</text><text class="h" x="449" y="809">Act</text>

<g fill="#555"><circle cx="71" cy="818.500" r="4.500"/><circle cx="71" cy="831.500" r="4.500"/></g>
<g fill="#f6c00c"><circle cx="71" cy="845" r="4.500"/><circle cx="71" cy="858" r="4.500"/><circle cx="71" cy="871" r="4.500"/><circle cx="71" cy="884" r="4.500"/></g>
<g fill="#c94f55"><circle cx="71" cy="897" r="4.500"/><circle cx="71" cy="910" r="4.500"/><circle cx="71" cy="923" r="4.500"/><circle cx="71" cy="936" r="4.500"/></g>

<text class="d" x="6" y="822">Wed</text><text class="dt" x="29" y="822">15:30</text><text class="dg" x="78" y="822">USD</text><text class="d" x="105" y="822">Final GDP q/q</text><text class="d" x="304" y="822">Done</text><text class="d" x="354" y="822">-31.7%</text><text class="d" x="404" y="822">-31.7%</text><text class="d" x="454" y="822">-</text>
<text class="d" x="6" y="835">Wed</text><text class="dt" x="29" y="835">17:00</text><text class="dg" x="78" y="835">USD</text><text class="d" x="105" y="835">Pending Home Sales m/m</text><text class="d" x="304" y="835">Done</text><text class="d" x="354" y="835">5.9%</text><text class="d" x="404" y="835">3.1%</text><text class="d" x="454" y="835">-</text>
<text class="g" x="6" y="848">Thu</text><text class="gt" x="29" y="848">11:30</text><text class="y" x="78" y="848">GBP</text><text class="g" x="105" y="848">Final Manufacturing PMI</text><text class="g" x="304" y="848">2h 16m</text><text class="g" x="354" y="848">54.3</text><text class="g" x="404" y="848">54.3</text><text class="g" x="454" y="848">-</text>
<text class="g" x="6" y="861">Thu</text><text class="gt" x="29" y="861">15:30</text><text class="y" x="78" y="861">USD</text><text class="g" x="105" y="861">Unemployment Claims</text><text class="g" x="304" y="861">6h 16m</text><text class="g" x="354" y="861">870K</text><text x="404" y="861" fill="#a53434">850K</text><text class="g" x="454" y="861">-</text>
<text class="g" x="6" y="874">Thu</text><text class="gt" x="29" y="874">15:30</text><text class="y" x="78" y="874">USD</text><text class="g" x="105" y="874">Personal Spending m/m</text><text class="g" x="304" y="874">6h 16m</text><text class="g" x="354" y="874">1.9%</text><text x="404" y="874" fill="#a53434">0.7%</text><text class="g" x="454" y="874">-</text>
<text class="g" x="6" y="887">Thu</text><text class="gt" x="29" y="887">15:30</text><text class="y" x="78" y="887">USD</text><text class="g" x="105" y="887">Core PCE Price Index m/m</text><text class="g" x="304" y="887">6h 16m</text><text class="g" x="354" y="887">0.3%</text><text class="g" x="404" y="887">0.3%</text><text class="g" x="454" y="887">-</text>
<text class="g" x="6" y="900">Thu</text><text class="gt" x="29" y="900">17:00</text><text class="r" x="78" y="900">USD</text><text class="g" x="105" y="900">ISM Manufacturing PMI</text><text class="g" x="304" y="900">7h 46m</text><text class="g" x="354" y="900">56.0</text><text class="g" x="404" y="900">56.0</text><text class="g" x="454" y="900">-</text>
<text class="g" x="6" y="913">Fri</text><text class="gt" x="29" y="913">15:30</text><text class="r" x="78" y="913">USD</text><text class="g" x="105" y="913">Non-Farm Employment Change</text><text class="g" x="304" y="913">1day 6h</text><text class="g" x="354" y="913">1371K</text><text x="404" y="913" fill="#a53434">900K</text><text class="g" x="454" y="913">-</text>
<text class="g" x="6" y="926">Fri</text><text class="gt" x="29" y="926">15:30</text><text class="r" x="78" y="926">USD</text><text class="g" x="105" y="926">Unemployment Rate</text><text class="g" x="304" y="926">1day 6h</text><text class="g" x="354" y="926">8.4%</text><text x="404" y="926" fill="#a53434">8.2%</text><text class="g" x="454" y="926">-</text>
<text class="g" x="6" y="939">Fri</text><text class="gt" x="29" y="939">15:30</text><text class="r" x="78" y="939">USD</text><text class="g" x="105" y="939">Average Hourly Earnings m/m</text><text class="g" x="304" y="939">1day 6h</text><text class="g" x="354" y="939">0.4%</text><text x="404" y="939" fill="#5fb85f">0.5%</text><text class="g" x="454" y="939">-</text>
<text x="7" y="955" fill="#4a5560">IceFX NewsInfo v2.7.0 &#160;- &#160;www.icefx.eu</text><text x="224" y="955" fill="#4a5560">Source: Forex Factory</text>

<!-- watermark -->
<text x="1580" y="951" fill="#6b7280" style="font-size:20px;letter-spacing:-.1px">Activate Windows</text>
<text x="1580" y="972" fill="#6b7280" style="font-size:14.500px;letter-spacing:.1px">Go to PC settings to activate Windows.</text>
</svg>
</body></html>
